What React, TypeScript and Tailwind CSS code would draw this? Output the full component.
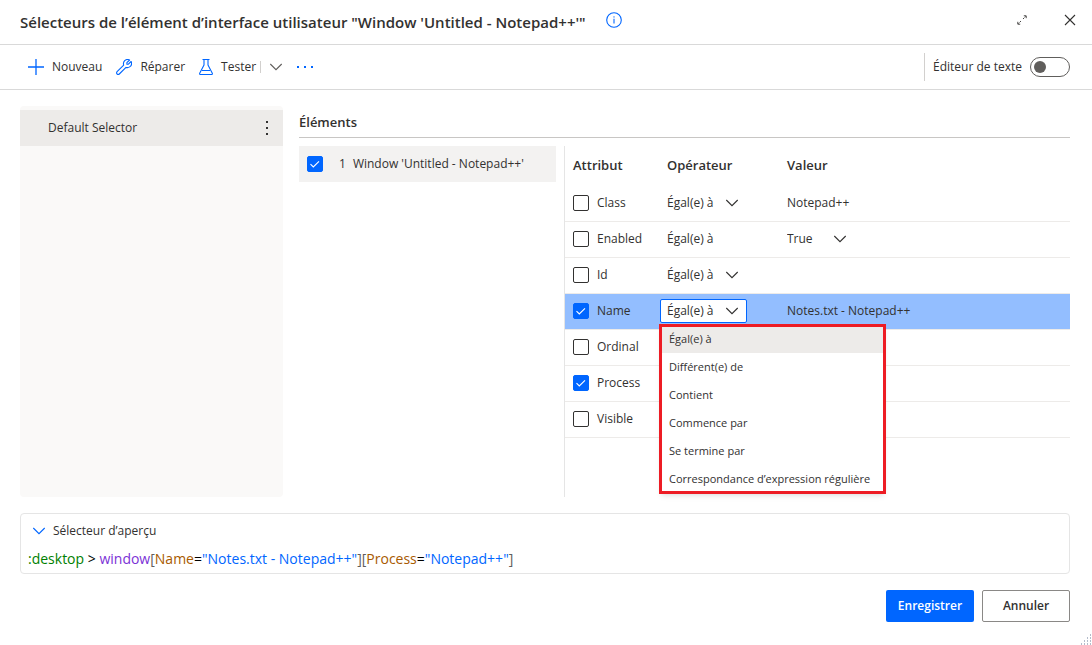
import React from 'react';

const font = "font-['Open_Sans','Noto_Sans',sans-serif]";

const operators = [
  'Égal(e) à',
  'Différent(e) de',
  'Contient',
  'Commence par',
  'Se termine par',
  "Correspondance d’expression régulière",
];

type Attribute = {
  name: string;
  checked?: boolean;
  operator?: 'select' | 'text';
  value?: string;
  valueSelect?: boolean;
  open?: boolean;
};

const attributes: Attribute[] = [
  { name: 'Class', operator: 'select', value: 'Notepad++' },
  { name: 'Enabled', operator: 'text', value: 'True', valueSelect: true },
  { name: 'Id', operator: 'select', value: '' },
  { name: 'Name', checked: true, operator: 'select', value: 'Notes.txt - Notepad++', open: true },
  { name: 'Ordinal' },
  { name: 'Process', checked: true },
  { name: 'Visible' },
];

const Chevron = ({ className = '' }: { className?: string }) => (
  <svg viewBox="0 0 14 8" fill="none" stroke="currentColor" className={`h-2 w-3.5 ${className}`}>
    <path d="M1.3 1L7 6.7L12.7 1" strokeWidth="1.1" />
  </svg>
);

const Checkbox = ({ id, checked, label }: { id: string; checked?: boolean; label?: string }) => (
  <span className="grid size-4 shrink-0 place-items-center">
    <input
      id={id}
      type="checkbox"
      aria-label={label}
      defaultChecked={checked}
      className="peer col-start-1 row-start-1 size-4 appearance-none rounded-xs border border-[#323130] bg-white checked:border-[#0066ff] checked:bg-[#0066ff]"
    />
    <svg
      viewBox="0 0 16 16"
      fill="none"
      stroke="white"
      className="pointer-events-none invisible col-start-1 row-start-1 size-4 peer-checked:visible"
    >
      <path d="M3.5 8.2L6.3 11L12 5.3" strokeWidth="1.1" />
    </svg>
  </span>
);

const OperatorMenu = () => (
  <ul
    role="listbox"
    className="absolute top-[26px] left-0 z-10 w-[225px] bg-white text-[11px] outline-3 -outline-offset-2 outline-[#ed1c24] shadow-md"
  >
    {operators.map((operator, index) => (
      <li
        key={operator}
        role="option"
        aria-selected={index === 0}
        className={`h-7 px-[9px] leading-7 whitespace-nowrap ${index === 0 ? 'bg-[#edebe9]' : ''}`}
      >
        {operator}
      </li>
    ))}
  </ul>
);

const OperatorCell = ({ row }: { row: Attribute }) => {
  if (!row.operator) return null;
  if (row.operator === 'text') return <span className="pl-[7px]">Égal(e) à</span>;
  return (
    <div className="relative flex h-6 w-[87px] items-center">
      <select
        aria-label={`Opérateur ${row.name}`}
        className={`h-6 w-full appearance-none rounded-xs border pr-5 pl-1.5 ${
          row.open ? 'border-[#0066ff] bg-white' : 'border-transparent'
        }`}
      >
        {operators.map((operator) => (
          <option key={operator}>{operator}</option>
        ))}
      </select>
      <Chevron className="pointer-events-none absolute right-2" />
      {row.open && <OperatorMenu />}
    </div>
  );
};

const ValueCell = ({ row }: { row: Attribute }) => {
  if (row.value === undefined) return null;
  if (row.valueSelect) {
    return (
      <div className="relative flex w-[68px] items-center">
        <select aria-label={`Valeur ${row.name}`} className="w-full appearance-none">
          <option>True</option>
          <option>False</option>
        </select>
        <Chevron className="pointer-events-none absolute right-2" />
      </div>
    );
  }
  return (
    <input aria-label={`Valeur ${row.name}`} defaultValue={row.value} className="w-full bg-transparent outline-none" />
  );
};

const Header = () => (
  <header className="flex h-[45px] items-center border-b border-[#d9d9d9] pr-4 pl-5">
    <h1 className="text-[15px] leading-5 font-semibold">
      Sélecteurs de l’élément d’interface utilisateur "Window 'Untitled - Notepad++'"
    </h1>
    <button aria-label="Informations" className="mb-1 ml-5 text-[#0066ff]">
      <svg viewBox="0 0 16 16" fill="none" stroke="currentColor" className="size-4">
        <circle cx="8" cy="8" r="7.3" strokeWidth="1.1" />
        <path d="M8 6.8V11.5" strokeWidth="1.1" />
        <circle cx="8" cy="4.9" r="0.7" fill="currentColor" stroke="none" />
      </svg>
    </button>
    <div className="mb-1 ml-auto flex items-center gap-9">
      <button aria-label="Agrandir">
        <svg viewBox="0 0 12 12" fill="none" stroke="currentColor" className="size-3">
          <path d="M7 5L10 2M5 7L2 10" strokeDasharray="1.4 0.8" strokeWidth="0.9" />
          <path d="M7.8 1.8H10.2V4.2M1.8 7.8V10.2H4.2" strokeWidth="0.9" />
        </svg>
      </button>
      <button aria-label="Fermer">
        <svg viewBox="0 0 12 12" fill="none" stroke="currentColor" className="size-3">
          <path d="M1 1L11 11M11 1L1 11" strokeWidth="1.1" />
        </svg>
      </button>
    </div>
  </header>
);

const Toolbar = () => (
  <div className="flex h-[45px] items-center border-b border-[#d9d9d9] pr-[22px] pl-7">
    <button className="flex items-center gap-2">
      <svg viewBox="0 0 16 16" stroke="#0066ff" className="size-4">
        <path d="M8 0V16M0 8H16" strokeWidth="1.3" />
      </svg>
      Nouveau
    </button>
    <button className="ml-3.5 flex items-center gap-2">
      <svg viewBox="0 0 16 16" fill="none" stroke="#0066ff" className="size-4" strokeLinejoin="round">
        <path
          d="M13.6 1L10.9 3.7V5.2H12.4L15.1 2.5C16 4.6 15.4 6.8 13.7 7.9C12.5 8.7 11.2 8.8 10 8.4L3.3 15C2.7 15.6 1.7 15.6 1.1 15C0.4 14.4 0.4 13.4 1.1 12.7L7.7 6.1C7.2 4.6 7.5 2.9 8.7 1.7C10 0.4 11.9 0.2 13.6 1Z"
          strokeWidth="1.1"
        />
      </svg>
      Réparer
    </button>
    <button className="ml-3.5 flex items-center gap-2">
      <svg viewBox="0 0 14 16" fill="none" stroke="#0066ff" className="h-4 w-3.5" strokeLinejoin="round">
        <path d="M3.5 0.5H10.5M5 0.5V6L0.7 14.2Q0.3 15.5 1.5 15.5H12.5Q13.7 15.5 13.3 14.2L9 6V0.5M3 11.5H11" strokeWidth="1.1" />
      </svg>
      Tester
    </button>
    <span className="ml-1 h-3 w-px bg-[#d2d0ce]" />
    <button aria-label="Options de test" className="ml-2 text-[#605e5c]">
      <Chevron />
    </button>
    <button aria-label="Plus" className="ml-3.5 text-[#0066ff]">
      <svg viewBox="0 0 16 2" fill="currentColor" className="h-0.5 w-4">
        <path d="M0 0H2V2H0ZM7 0H9V2H7ZM14 0H16V2H14Z" />
      </svg>
    </button>
    <div className="ml-auto flex h-7 items-center border-l border-[#d2d0ce] pl-2">
      <label htmlFor="text-editor">Éditeur de texte</label>
      <input
        id="text-editor"
        type="checkbox"
        role="switch"
        className="ml-2 flex h-5 w-10 appearance-none items-center rounded-full border border-[#605e5c] bg-white pl-[3px] before:size-3 before:rounded-full before:bg-[#605e5c] before:content-['']"
      />
    </div>
  </div>
);

const AttributeTable = () => (
  <div className="min-w-0 flex-1 border-l border-[#e5e5e5]">
    <table className="w-full table-fixed border-collapse">
      <thead>
        <tr className="h-[39px] text-left text-[13px]">
          <th className="w-[95px] pl-2 font-semibold">Attribut</th>
          <th className="w-[127px] pl-[7px] font-semibold">Opérateur</th>
          <th className="font-semibold">Valeur</th>
        </tr>
      </thead>
      <tbody>
        {attributes.map((row) => (
          <tr key={row.name} className={`h-9 border-b border-[#edebe9] ${row.open ? 'bg-[#93beff]' : ''}`}>
            <td className="pl-2">
              <div className="flex items-center gap-2">
                <Checkbox id={`attr-${row.name}`} checked={row.checked} />
                <label htmlFor={`attr-${row.name}`}>{row.name}</label>
              </div>
            </td>
            <td>
              <OperatorCell row={row} />
            </td>
            <td>
              <ValueCell row={row} />
            </td>
          </tr>
        ))}
      </tbody>
    </table>
  </div>
);

const Preview = () => (
  <section className="mt-4 mr-[22px] ml-5 h-[61px] rounded border border-[#e5e5e5] px-[7px]">
    <button className="mt-[7px] flex h-5 items-center gap-[7px] pl-1">
      <Chevron className="text-[#0066ff]" />
      Sélecteur d’aperçu
    </button>
    <p className="mt-2 text-sm text-black">
      <span className="text-[#008000]">:desktop</span> {'>'} <span className="text-[#7b32d6]">window</span>
      <span className="text-[#605e5c]">[</span>
      <span className="text-[#a85a00]">Name</span>=
      <span className="text-[#0066ff]">"Notes.txt - Notepad++"</span>
      <span className="text-[#605e5c]">][</span>
      <span className="text-[#a85a00]">Process</span>=<span className="text-[#0066ff]">"Notepad++"</span>
      <span className="text-[#605e5c]">]</span>
    </p>
  </section>
);

const App = () => {
  return (
    <div className={`relative flex min-h-screen flex-col bg-white text-xs text-[#323130] ${font}`}>
      <Header />
      <Toolbar />
      <main className="flex flex-1 gap-4 pt-4 pr-[22px] pl-5">
        <aside className="w-[263px] shrink-0 rounded bg-[#faf9f8] pt-1">
          <div className="flex h-9 items-center justify-between bg-[#edebe9] pr-3 pl-7">
            <span>Default Selector</span>
            <button aria-label="Autres actions">
              <svg viewBox="0 0 8 14" fill="currentColor" className="h-3.5 w-2">
                <path d="M3 0H5V2H3ZM3 6H5V8H3ZM3 12H5V14H3Z" />
              </svg>
            </button>
          </div>
        </aside>
        <section className="flex min-w-0 flex-1 flex-col">
          <h2 className="h-8 border-b border-[#c8c6c4] text-[13px] leading-8 font-semibold">Éléments</h2>
          <div className="mt-2 flex flex-1">
            <div className="mr-2 w-[257px] shrink-0">
              <div className="flex h-9 items-center bg-[#f3f2f1] pl-2">
                <Checkbox id="element-1" checked label="Window 'Untitled - Notepad++'" />
                <label htmlFor="element-1" className="ml-4 flex gap-[7px]">
                  <span>1</span>
                  <span>Window 'Untitled - Notepad++'</span>
                </label>
              </div>
            </div>
            <AttributeTable />
          </div>
        </section>
      </main>
      <Preview />
      <footer className="flex justify-end gap-2 px-[22px] pt-4 pb-[23px]">
        <button className="h-8 w-[88px] rounded-xs bg-[#0066ff] font-semibold text-white">Enregistrer</button>
        <button className="h-8 w-[88px] rounded-xs border border-[#8a8886] font-semibold">Annuler</button>
      </footer>
      <svg viewBox="0 0 12 12" fill="#b4bccb" className="absolute right-0 bottom-0 size-3">
        <path d="M10 1h1v2h-1zM7 4h1v2h-1zM10 4h1v2h-1zM4 7h1v2h-1zM7 7h1v2h-1zM10 7h1v2h-1zM1 10h1v2h-1zM4 10h1v2h-1zM7 10h1v2h-1zM10 10h1v2h-1z" />
      </svg>
    </div>
  );
};

export default App;
